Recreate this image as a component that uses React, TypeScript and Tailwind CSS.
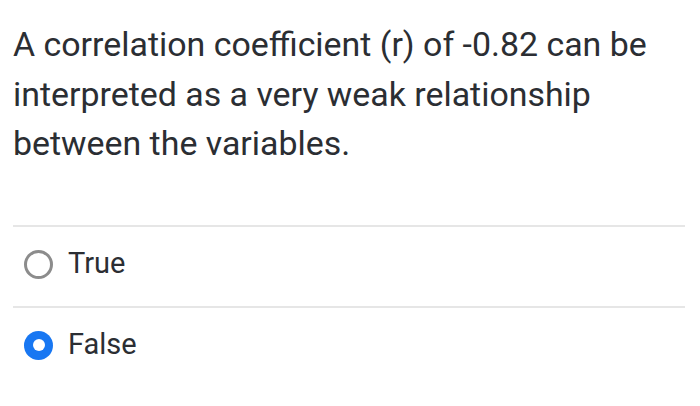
export default function App() {
  const options = [
    { label: 'True', checked: false },
    { label: 'False', checked: true },
  ];

  return (
    <div className="h-[406px] w-[700px] bg-white font-['Roboto',sans-serif] text-[#2b2e33]">
      <div className="px-[13px] pt-[20px]">
        <p className="pr-[10px] text-[33.9px] leading-[49.5px]">
          A correlation coefficient (r) of -0.82 can be interpreted as a very weak relationship between the
          variables.
        </p>
      </div>
      <div className="mt-[56px] ml-[13px] mr-[15px]">
        {options.map((o) => (
          <div key={o.label} className="flex h-[81px] items-center border-t-2 border-[#e6e6e6] pb-[4px]">
            <span
              className={`ml-[11px] flex h-[29px] w-[29px] items-center justify-center rounded-full ${
                o.checked ? 'bg-[#1877f2]' : 'border-[3px] border-[#8c8c8c]'
              }`}
            >
              {o.checked && <span className="h-[12px] w-[12px] rounded-full bg-white" />}
            </span>
            <span className="ml-[15px] text-[29px]">{o.label}</span>
          </div>
        ))}
      </div>
    </div>
  );
}
